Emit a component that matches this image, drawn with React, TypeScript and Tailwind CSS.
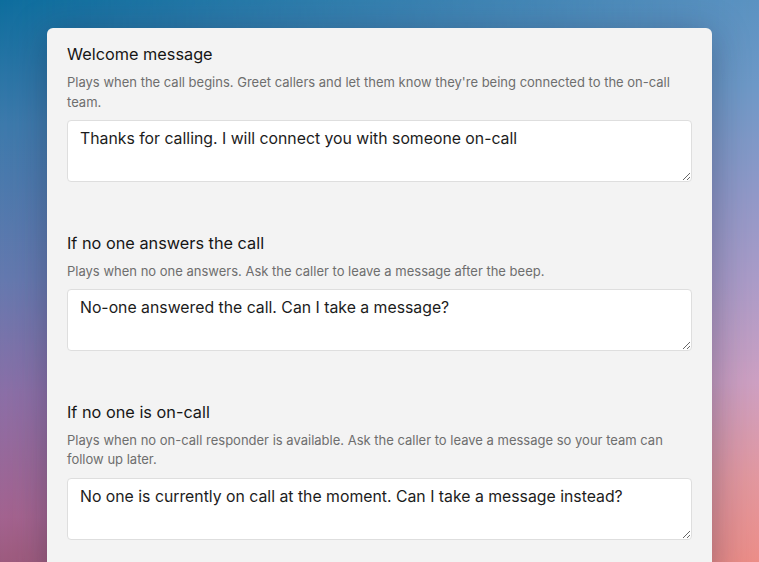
import { useState } from "react";

type PromptSection = {
  title: string;
  description: string;
  value: string;
};

const sections: PromptSection[] = [
  {
    title: "Welcome message",
    description:
      "Plays when the call begins. Greet callers and let them know they're being connected to the on-call team.",
    value: "Thanks for calling. I will connect you with someone on-call",
  },
  {
    title: "If no one answers the call",
    description: "Plays when no one answers. Ask the caller to leave a message after the beep.",
    value: "No-one answered the call. Can I take a message?",
  },
  {
    title: "If no one is on-call",
    description:
      "Plays when no on-call responder is available. Ask the caller to leave a message so your team can follow up later.",
    value: "No one is currently on call at the moment. Can I take a message instead?",
  },
];

function PromptField({ section }: { section: PromptSection }) {
  const [value, setValue] = useState(section.value);

  return (
    <div className="flex flex-col">
      <h3 className="text-[16.3px] leading-6 font-normal text-[#161616]">{section.title}</h3>
      <p className="mt-[7px] text-[13px] leading-[19.5px] text-[#6e6e6e]">{section.description}</p>
      <textarea
        value={value}
        onChange={(e) => setValue(e.target.value)}
        className="mt-2 h-[62px] w-full rounded-[4px] border border-[#dedede] bg-white px-3 pt-[6px] text-[15.8px] leading-6 text-[#1c1c1c] outline-none"
      />
    </div>
  );
}

export default function App() {
  return (
    <div
      className="relative h-[562px] w-full overflow-hidden bg-[linear-gradient(180deg,#5c93c2_0%,#6e99c7_15%,#9299c8_35%,#ab9cc8_50%,#cda0c2_68%,#e2989f_85%,#ec8e88_100%)] px-[47px] pt-[28px]"
      style={{ fontFamily: "Inter, 'Noto Sans', sans-serif" }}
    >
      {/* left side of the backdrop is deeper and more saturated */}
      <div className="pointer-events-none absolute inset-0 bg-[linear-gradient(180deg,#0d6d9d_0%,#3c79ab_22%,#6478ae_50%,#8a6ea6_70%,#a2628f_92%,#9c5a7e_100%)] [mask-image:linear-gradient(90deg,#000_0%,rgba(0,0,0,0.55)_45%,transparent_100%)]" />
      <div className="relative flex flex-col gap-[48.5px] rounded-t-md bg-[#f3f3f3] px-5 pt-[14px] pb-10 shadow-[0_6px_36px_rgba(20,30,60,0.35)]">
        {sections.map((section) => (
          <PromptField key={section.title} section={section} />
        ))}
      </div>
    </div>
  );
}
